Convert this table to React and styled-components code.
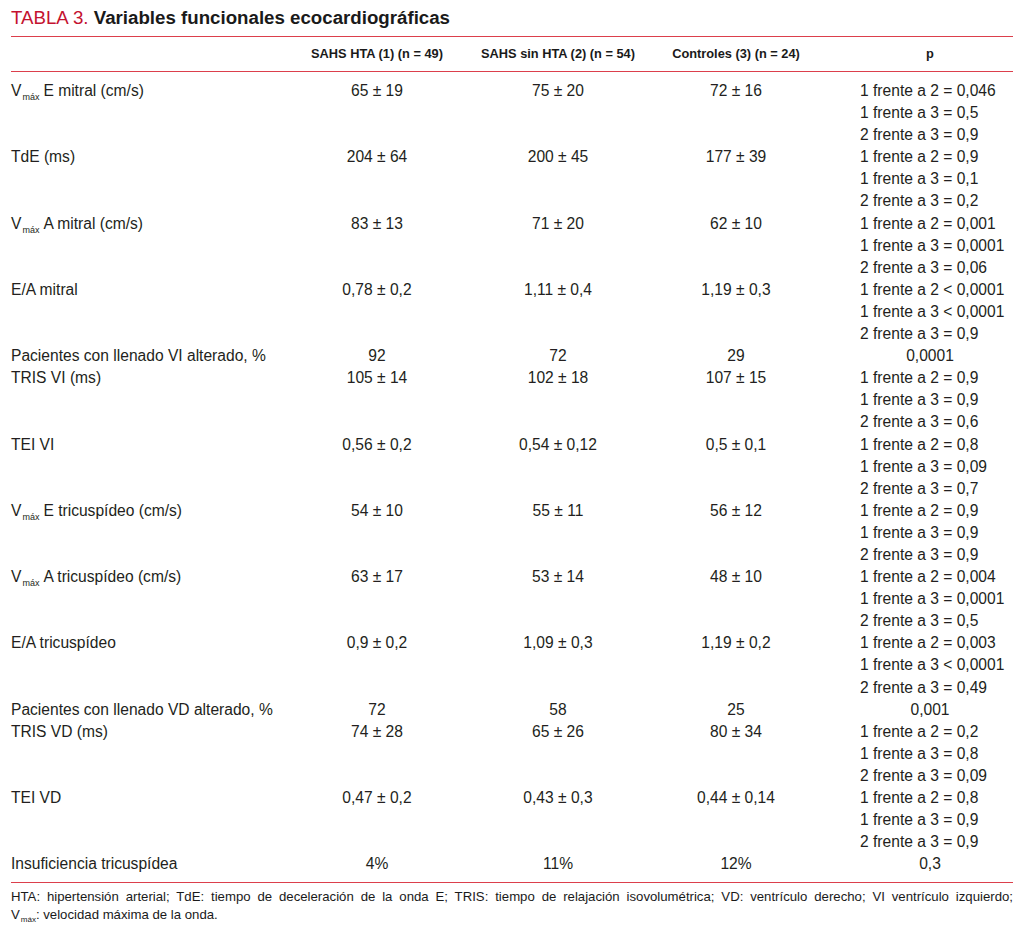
import React from "react";
import styled, { createGlobalStyle } from "styled-components";

const Global = createGlobalStyle`
  html, body { margin: 0; padding: 0; background: #fff; }
  body { color: #231f20; }
`;

const SANS = `"Liberation Sans", Arial, Helvetica, sans-serif`;

const Page = styled.div`
  width: 1002px;
  padding: 0 11px;
  background: #fff;
`;

const Title = styled.h1`
  margin: 0;
  padding: 6px 0;
  font-family: ${SANS};
  font-size: 18.7px;
  line-height: 24px;
  font-weight: 700;
  color: #1a1a1a;
  border-bottom: 1px solid #dc3f4c;
`;

const TitleTag = styled.span`
  font-weight: 400;
  color: #c4122f;
`;

const Grid = styled.div`
  display: grid;
  grid-template-columns: 276px 180px 182px 174px 190px;
  font-family: ${SANS};
`;

const HeadRow = styled(Grid)`
  padding: 6px 0;
  border-bottom: 1px solid #dc3f4c;
  font-size: 12.8px;
  line-height: 22px;
  font-weight: 700;
  color: #1a1a1a;
`;

const HeadCell = styled.div`
  text-align: center;
  white-space: nowrap;
  padding-left: ${(p) => (p.$p ? "24px" : "0")};
`;

const Body = styled.div`
  padding: 8px 0 6.4px;
  border-bottom: 1px solid #dc3f4c;
`;

const Row = styled(Grid)`
  font-size: 15.6px;
  line-height: 22.1px;
  color: #231f20;
`;

const Label = styled.div`
  text-align: left;
  white-space: nowrap;
`;

const Value = styled.div`
  text-align: center;
  white-space: nowrap;
`;

const PCell = styled.div`
  white-space: nowrap;
  text-align: ${(p) => (p.$single ? "center" : "left")};
  padding-left: ${(p) => (p.$single ? "24px" : "37px")};
`;

const Sub = styled.span`
  font-size: 9px;
  line-height: 1;
  vertical-align: -4px;
  margin: 0 4px 0 1px;
`;

const Foot = styled.div`
  padding-top: 5px;
  font-family: ${SANS};
  font-size: 13.2px;
  line-height: 18px;
  color: #1a1a1a;
`;

const FootLine = styled.div`
  white-space: nowrap;
  text-align: ${(p) => (p.$full ? "justify" : "left")};
  text-align-last: ${(p) => (p.$full ? "justify" : "auto")};
`;

const FootSub = styled(Sub)`
  font-size: 8px;
  vertical-align: -3px;
  margin: 0 0 0 1px;
`;

const V = ({ children }) => (
  <>
    V<Sub>máx</Sub>
    {children}
  </>
);

const rows = [
  { label: <V>E mitral (cm/s)</V>, v: ["65 ± 19", "75 ± 20", "72 ± 16"], p: ["1 frente a 2 = 0,046", "1 frente a 3 = 0,5", "2 frente a 3 = 0,9"] },
  { label: "TdE (ms)", v: ["204 ± 64", "200 ± 45", "177 ± 39"], p: ["1 frente a 2 = 0,9", "1 frente a 3 = 0,1", "2 frente a 3 = 0,2"] },
  { label: <V>A mitral (cm/s)</V>, v: ["83 ± 13", "71 ± 20", "62 ± 10"], p: ["1 frente a 2 = 0,001", "1 frente a 3 = 0,0001", "2 frente a 3 = 0,06"] },
  { label: "E/A mitral", v: ["0,78 ± 0,2", "1,11 ± 0,4", "1,19 ± 0,3"], p: ["1 frente a 2 < 0,0001", "1 frente a 3 < 0,0001", "2 frente a 3 = 0,9"] },
  { label: "Pacientes con llenado VI alterado, %", v: ["92", "72", "29"], p: ["0,0001"], single: true },
  { label: "TRIS VI (ms)", v: ["105 ± 14", "102 ± 18", "107 ± 15"], p: ["1 frente a 2 = 0,9", "1 frente a 3 = 0,9", "2 frente a 3 = 0,6"] },
  { label: "TEI VI", v: ["0,56 ± 0,2", "0,54 ± 0,12", "0,5 ± 0,1"], p: ["1 frente a 2 = 0,8", "1 frente a 3 = 0,09", "2 frente a 3 = 0,7"] },
  { label: <V>E tricuspídeo (cm/s)</V>, v: ["54 ± 10", "55 ± 11", "56 ± 12"], p: ["1 frente a 2 = 0,9", "1 frente a 3 = 0,9", "2 frente a 3 = 0,9"] },
  { label: <V>A tricuspídeo (cm/s)</V>, v: ["63 ± 17", "53 ± 14", "48 ± 10"], p: ["1 frente a 2 = 0,004", "1 frente a 3 = 0,0001", "2 frente a 3 = 0,5"] },
  { label: "E/A tricuspídeo", v: ["0,9 ± 0,2", "1,09 ± 0,3", "1,19 ± 0,2"], p: ["1 frente a 2 = 0,003", "1 frente a 3 < 0,0001", "2 frente a 3 = 0,49"] },
  { label: "Pacientes con llenado VD alterado, %", v: ["72", "58", "25"], p: ["0,001"], single: true },
  { label: "TRIS VD (ms)", v: ["74 ± 28", "65 ± 26", "80 ± 34"], p: ["1 frente a 2 = 0,2", "1 frente a 3 = 0,8", "2 frente a 3 = 0,09"] },
  { label: "TEI VD", v: ["0,47 ± 0,2", "0,43 ± 0,3", "0,44 ± 0,14"], p: ["1 frente a 2 = 0,8", "1 frente a 3 = 0,9", "2 frente a 3 = 0,9"] },
  { label: "Insuficiencia tricuspídea", v: ["4%", "11%", "12%"], p: ["0,3"], single: true },
];

export default function App() {
  return (
    <Page>
      <Global />
      <Title>
        <TitleTag>TABLA 3.</TitleTag> Variables funcionales ecocardiográficas
      </Title>
      <HeadRow>
        <HeadCell />
        <HeadCell>SAHS HTA (1) (n = 49)</HeadCell>
        <HeadCell>SAHS sin HTA (2) (n = 54)</HeadCell>
        <HeadCell>Controles (3) (n = 24)</HeadCell>
        <HeadCell $p>p</HeadCell>
      </HeadRow>
      <Body>
        {rows.map((r, i) => (
          <Row key={i}>
            <Label>{r.label}</Label>
            {r.v.map((x, j) => (
              <Value key={j}>{x}</Value>
            ))}
            <PCell $single={r.single}>
              {r.p.map((x, k) => (
                <div key={k}>{x}</div>
              ))}
            </PCell>
          </Row>
        ))}
      </Body>
      <Foot>
        <FootLine $full>
          HTA: hipertensión arterial; TdE: tiempo de deceleración de la onda E; TRIS: tiempo de relajación isovolumétrica; VD: ventrículo derecho; VI ventrículo izquierdo;
        </FootLine>
        <FootLine>
          V<FootSub>máx</FootSub>: velocidad máxima de la onda.
        </FootLine>
      </Foot>
    </Page>
  );
}
